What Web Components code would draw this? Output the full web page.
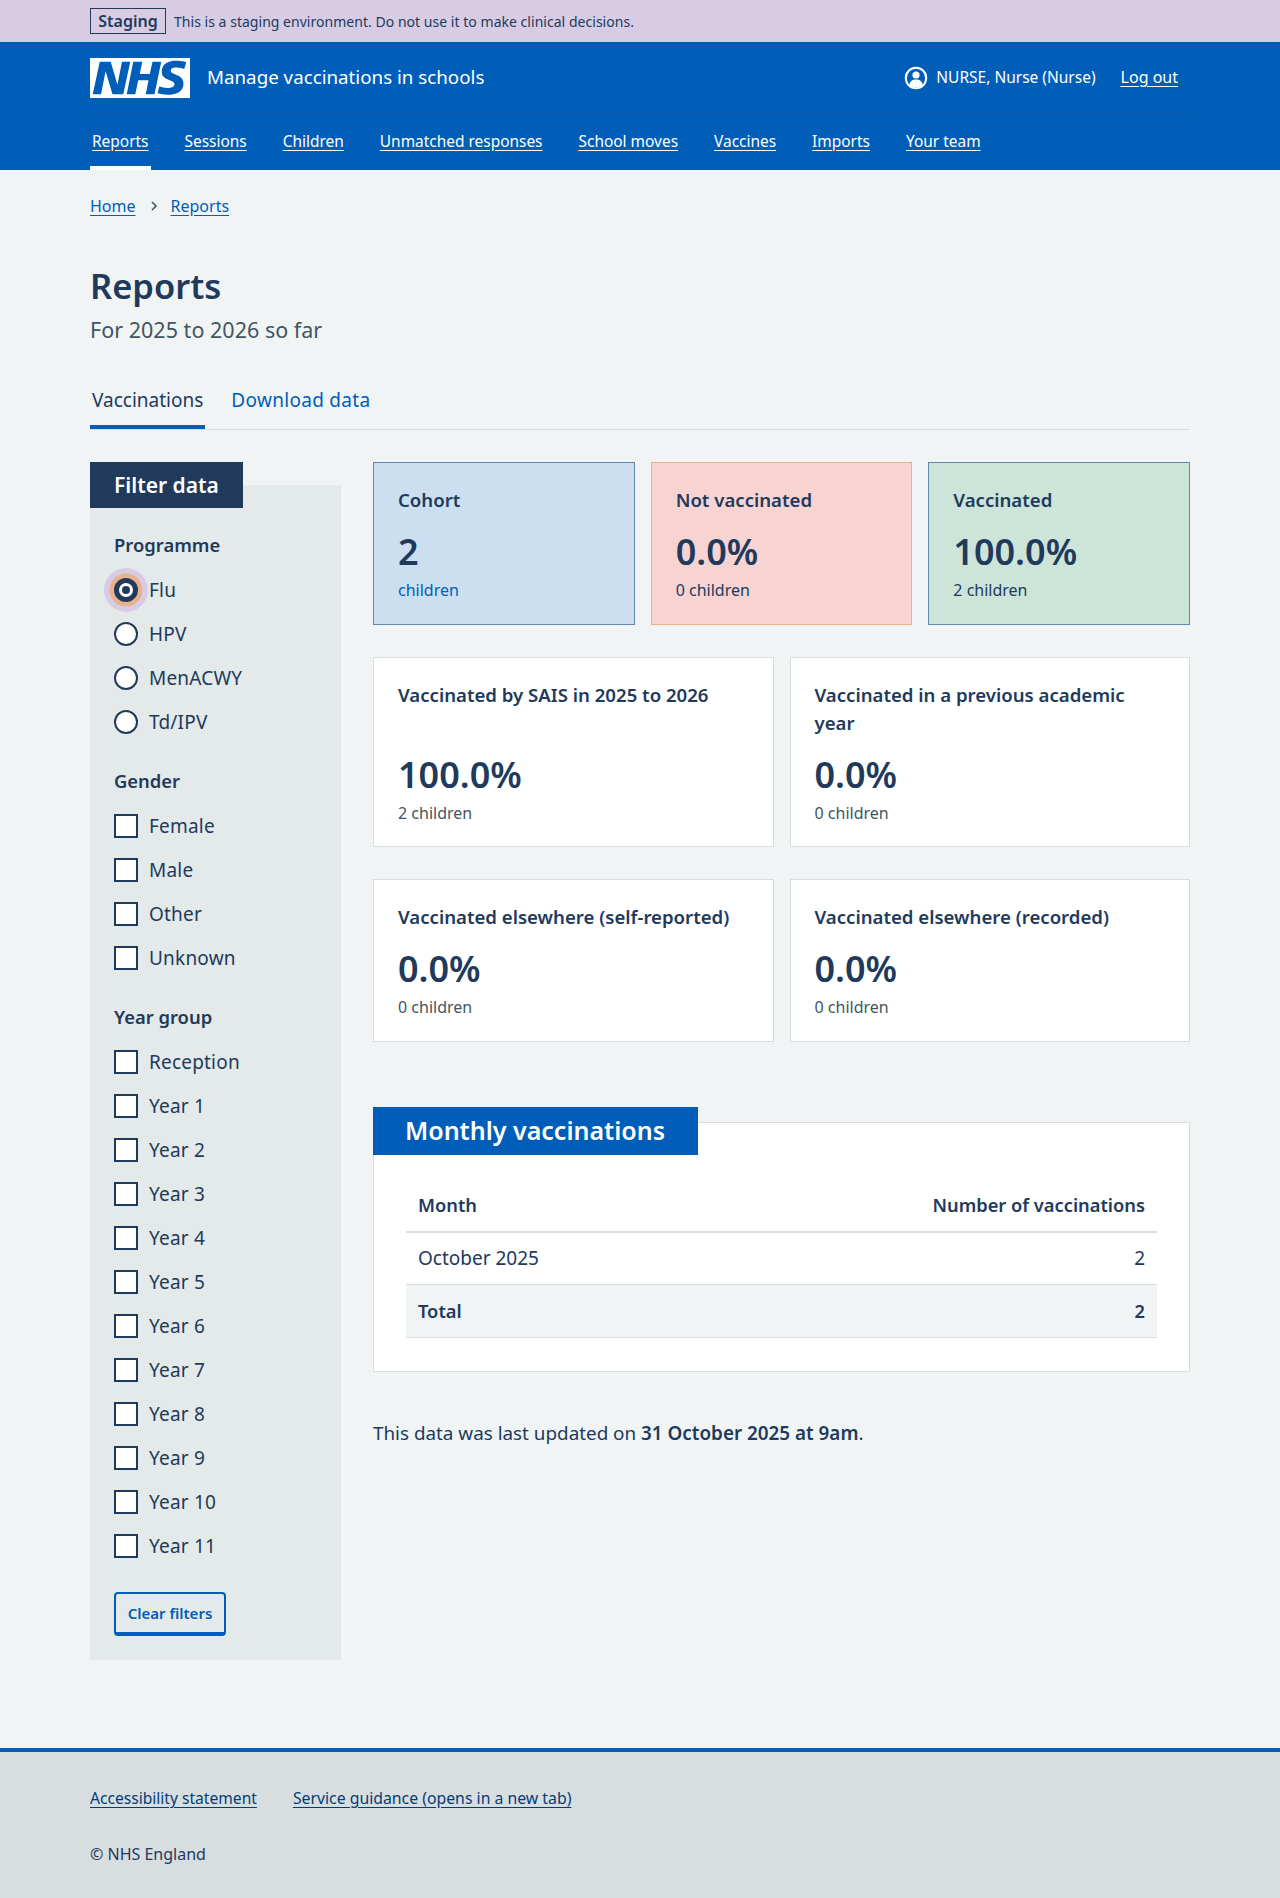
<!DOCTYPE html>
<html lang="en">
<head>
<meta charset="utf-8">
<title>Reports</title>
<style>
  html, body { margin: 0; padding: 0; }
  body {
    background: #f0f4f5;
    color: #213a5c;
    font-family: "Noto Sans", "Open Sans", Arial, sans-serif;
    font-size: 17px;
    line-height: 24px;
  }
</style>
</head>
<body>
<staging-banner>This is a staging environment. Do not use it to make clinical decisions.</staging-banner>
<site-header service="Manage vaccinations in schools" user="NURSE, Nurse (Nurse)"></site-header>
<bread-crumbs></bread-crumbs>
<page-main>
  <page-title slot="title" sub="For 2025 to 2026 so far">Reports</page-title>
  <page-tabs slot="tabs"></page-tabs>
  <filter-panel slot="side">
    <filter-group legend="Programme" type="radio" options="Flu,HPV,MenACWY,Td/IPV" selected="Flu"></filter-group>
    <filter-group legend="Gender" type="checkbox" options="Female,Male,Other,Unknown"></filter-group>
    <filter-group legend="Year group" type="checkbox" options="Reception,Year 1,Year 2,Year 3,Year 4,Year 5,Year 6,Year 7,Year 8,Year 9,Year 10,Year 11"></filter-group>
  </filter-panel>
  <stat-row cols="3">
    <stat-card tone="blue" heading="Cohort" value="2" note="children"></stat-card>
    <stat-card tone="red" heading="Not vaccinated" value="0.0%" note="0 children"></stat-card>
    <stat-card tone="green" heading="Vaccinated" value="100.0%" note="2 children"></stat-card>
  </stat-row>
  <stat-row cols="2">
    <stat-card heading="Vaccinated by SAIS in 2025 to 2026" value="100.0%" note="2 children" tall></stat-card>
    <stat-card heading="Vaccinated in a previous academic&lt;br&gt;year" value="0.0%" note="0 children" tall></stat-card>
  </stat-row>
  <stat-row cols="2">
    <stat-card heading="Vaccinated elsewhere (self-reported)" value="0.0%" note="0 children"></stat-card>
    <stat-card heading="Vaccinated elsewhere (recorded)" value="0.0%" note="0 children"></stat-card>
  </stat-row>
  <monthly-table></monthly-table>
  <updated-note>This data was last updated on <b>31 October 2025 at 9am</b>.</updated-note>
</page-main>
<site-footer></site-footer>

<script>
const define = (name, html) => {
  customElements.define(name, class extends HTMLElement {
    connectedCallback() {
      if (this.shadowRoot) return;
      const root = this.attachShadow({mode: 'open'});
      root.innerHTML = typeof html === 'function' ? html(this) : html;
    }
  });
};

define('staging-banner', `
  <style>
    :host { display: block; background: #d8cce4; height: 42px; }
    .in { width: 1100px; margin: 0 auto; height: 42px; display: flex; align-items: center; gap: 8px; font-size: 14px; }
    .in span { position: relative; top: 1px; letter-spacing: .03px; }
    strong { border: 1px solid #213a5c; height: 26px; width: 76px; box-sizing: border-box; display: flex; align-items: center; justify-content: center; font-size: 16px; font-weight: 600; }
  </style>
  <div class="in"><strong>Staging</strong><span><slot></slot></span></div>`);

const navItems = ['Reports', 'Sessions', 'Children', 'Unmatched responses', 'School moves', 'Vaccines', 'Imports', 'Your team'];

define('site-header', el => `
  <style>
    :host { display: block; background: #005eb8; color: #fff; height: 128px; }
    .top { width: 1100px; margin: 0 auto; height: 71px; border-bottom: 1px solid #0a5aa8; display: flex; align-items: center; }
    .logo { display: block; width: 100px; height: 40px; }
    .service { margin-left: 17px; font-size: 18.75px; margin-top: -2px; }
    .user { margin-left: auto; display: flex; align-items: center; gap: 8px; font-size: 15.5px; }
    .user svg { width: 24px; height: 24px; display: block; }
    .user span { margin-top: -1px; }
    a { color: #fff; text-decoration: underline; text-underline-offset: 3px; }
    .out { margin-left: 25px; margin-right: 12px; margin-top: -1px; font-size: 16px; }
    nav { width: 1100px; margin: 0 auto; height: 56px; display: flex; gap: 32px; font-size: 15.45px; }
    nav a { display: flex; align-items: center; padding: 2px 2px 4px; box-sizing: border-box; height: 56px; }
    nav a.on { border-bottom: 4px solid #fff; padding-bottom: 0; }
  </style>
  <div class="top">
    <svg class="logo" viewBox="0 0 40 16" role="img" aria-label="NHS"><path fill="#fff" d="M0 0h40v16H0z"/><path fill="#005eb8" d="M3.9 1.5h4.4l2.6 9h.1l1.8-9h3.3l-2.8 13H9l-2.7-9h-.1l-1.8 9H1.1M17.3 1.5h3.6l-1 4.9h4L25 1.5h3.5l-2.7 13h-3.5l1.1-5.6h-4.1l-1.2 5.6h-3.4M37.7 4.4c-.7-.3-1.6-.6-2.9-.6-1.4 0-2.5.2-2.5 1.3 0 1.8 5.1 1.2 5.1 5.1 0 3.6-3.3 4.5-6.4 4.5-1.3 0-2.9-.3-4-.7l.8-2.7c.7.4 2.1.7 3.2.7s2.8-.2 2.8-1.5c0-2.1-5.1-1.3-5.1-5 0-3.4 2.9-4.4 5.8-4.4 1.6 0 3.1.2 4 .6"/></svg>
    <span class="service">${el.getAttribute('service')}</span>
    <div class="user">
      <svg viewBox="0 0 24 24" aria-hidden="true"><circle cx="12" cy="12" r="10.2" fill="none" stroke="#fff" stroke-width="2"/><circle cx="12" cy="9" r="3.6" fill="#fff"/><path fill="#fff" d="M5.5 19c0-3.6 2.6-5.6 6.5-5.6s6.5 2 6.5 5.6a10 10 0 0 1-13 0z"/></svg>
      <span>${el.getAttribute('user')}</span>
    </div>
    <a class="out" href="#">Log out</a>
  </div>
  <nav>${navItems.map((n, i) => `<a href="#" class="${i ? '' : 'on'}">${n}</a>`).join('')}</nav>`);

define('bread-crumbs', `
  <style>
    :host { display: block; width: 1100px; margin: 0 auto; padding-top: 24px; height: 48px; font-size: 16px; }
    div { display: flex; align-items: center; gap: 11px; height: 24px; }
    a { color: #005eb8; text-underline-offset: 3px; }
    svg { width: 8px; height: 12px; margin: 0 2px 0 3px; }
  </style>
  <div><a href="#">Home</a><svg viewBox="0 0 8 12" aria-hidden="true"><path d="M2 2l4 4-4 4" fill="none" stroke="#425563" stroke-width="1.6"/></svg><a href="#">Reports</a></div>`);

define('page-main', `
  <style>
    :host { display: block; width: 1100px; margin: 0 auto; height: 1506px; }
    .cols { display: grid; grid-template-columns: 251px 817px; column-gap: 32px; margin-top: 32px; }
    .right { display: flex; flex-direction: column; gap: 32px; }
  </style>
  <slot name="title"></slot>
  <slot name="tabs"></slot>
  <div class="cols">
    <div><slot name="side"></slot></div>
    <div class="right"><slot></slot></div>
  </div>`);

define('page-title', el => `
  <style>
    :host { display: block; padding-top: 22px; }
    h1 { margin: 0; font-size: 34.5px; line-height: 44px; font-weight: 600; }
    p { margin: 6px 0 0; font-size: 21.5px; line-height: 32px; color: #425563; letter-spacing: .02px; }
  </style>
  <h1><slot></slot></h1>
  <p>${el.getAttribute('sub')}</p>`);

define('page-tabs', `
  <style>
    :host { display: block; margin-top: 33px; border-bottom: 1px solid #d8dde0; height: 51px; box-sizing: border-box; font-size: 19px; }
    div { display: flex; gap: 24px; height: 50px; }
    span, a { display: block; padding: 0 2px; line-height: 42px; }
    span { border-bottom: 4px solid #005eb8; height: 46px; }
    a { color: #005eb8; text-decoration: none; letter-spacing: .3px; }
  </style>
  <div><span>Vaccinations</span><a href="#">Download data</a></div>`);

define('filter-panel', `
  <style>
    :host { display: flow-root; background: #e4e9e9; margin-top: 23px; padding: 0 24px; height: 1175px; box-sizing: border-box; }
    h2 { margin: -23px -24px 0; width: 153px; height: 46px; box-sizing: border-box; background: #213a5c; color: #fff; font-size: 21px; line-height: 46px; padding-left: 24px; font-weight: 600; }
    button { display: block; margin-top: 24px; width: 112px; height: 44px; box-sizing: border-box; background: transparent; border: 2px solid #005eb8; border-bottom-width: 4px; border-radius: 4px; color: #005eb8; font: 600 15px/1 "Noto Sans", sans-serif; padding: 0; }
  </style>
  <h2>Filter data</h2>
  <slot></slot>
  <button>Clear filters</button>`);

define('filter-group', el => {
  const type = el.getAttribute('type');
  const selected = el.getAttribute('selected');
  const rows = el.getAttribute('options').split(',').map(o =>
    `<div class="row"><i class="${type} ${o === selected ? 'on' : ''}"></i><span>${o}</span></div>`).join('');
  return `
  <style>
    :host { display: block; padding-top: 24px; font-size: 19px; }
    h3 { margin: -1px 0 9px; font-size: 18.4px; line-height: 28px; font-weight: 600; }
    .row { display: flex; align-items: center; height: 44px; gap: 11px; letter-spacing: .2px; }
    i { display: block; width: 24px; height: 24px; box-sizing: border-box; background: #fff; border: 2px solid #213a5c; flex: none; }
    .radio { border-radius: 50%; }
    .on { border-width: 5px; position: relative; box-shadow: 0 0 0 4.5px #e8b28e, 0 0 0 10px #d8cce4; }
    .on::after { content: ""; position: absolute; inset: 3px; border-radius: 50%; background: #213a5c; }
  </style>
  <h3>${el.getAttribute('legend')}</h3>${rows}`;
});

define('stat-row', el => `
  <style>
    :host { display: grid; grid-template-columns: repeat(${el.getAttribute('cols')}, 1fr); gap: 16px; }
  </style>
  <slot></slot>`);

const tones = {
  blue: ['#cbdff0', '#5f88ac', '#005eb8'],
  red: ['#f7d3d1', '#eeb08a', '#213a5c'],
  green: ['#cde4d8', '#5f88ac', '#213a5c']
};

define('stat-card', el => {
  const tone = tones[el.getAttribute('tone')] || ['#fff', '#d8dde0', '#425563'];
  return `
  <style>
    :host { display: block; box-sizing: border-box; background: ${tone[0]}; border: 1px solid ${tone[1]}; padding: 23px 24px 21.5px; }
    h3 { margin: 0; font-size: 18.6px; line-height: 28px; font-weight: 600; min-height: ${el.hasAttribute('tall') ? 56 : 28}px; }
    .v { font-size: 36px; line-height: 44px; font-weight: 600; margin-top: 16px; }
    .n { font-size: 16px; line-height: 24px; margin-top: 4px; color: ${tone[2]}; }
  </style>
  <h3>${el.getAttribute('heading')}</h3>
  <div class="v">${el.getAttribute('value')}</div>
  <div class="n">${el.getAttribute('note')}</div>`;
});

define('monthly-table', `
  <style>
    :host { display: block; margin-top: 48px; background: #fff; border: 1px solid #d8dde0; position: relative; height: 250px; box-sizing: border-box; padding: 0 32px; }
    h2 { position: absolute; left: -1px; top: -16px; margin: 0; width: 325px; height: 48px; box-sizing: border-box; padding-left: 32px; background: #005eb8; color: #fff; font-size: 25px; line-height: 47px; font-weight: 600; }
    table { border-collapse: collapse; width: 751px; margin-top: 56px; font-size: 19px; }
    th, td { box-sizing: border-box; padding: 0 12px; height: 53px; text-align: left; border-bottom: 1px solid #d8dde0; font-weight: 400; }
    th { font-weight: 600; font-size: 18.3px; }
    thead th { border-bottom-width: 2px; }
    .r { text-align: right; }
    .t td { background: #f0f4f5; font-weight: 600; font-size: 18.3px; }
  </style>
  <h2>Monthly vaccinations</h2>
  <table>
    <thead><tr><th>Month</th><th class="r">Number of vaccinations</th></tr></thead>
    <tbody>
      <tr><td>October 2025</td><td class="r">2</td></tr>
      <tr class="t"><td>Total</td><td class="r">2</td></tr>
    </tbody>
  </table>`);

define('updated-note', `
  <style>
    :host { display: block; margin-top: 15px; font-size: 18.85px; line-height: 28px; }
    ::slotted(b) { font-weight: 600; }
  </style>
  <slot></slot>`);

define('site-footer', `
  <style>
    :host { display: block; background: #d8dde0; border-top: 4px solid #005eb8; height: 150px; font-size: 15.6px; }
    .in { width: 1100px; margin: 0 auto; padding-top: 34px; }
    .links { display: flex; gap: 36px; }
    a { color: #003d78; text-underline-offset: 3px; }
    a + a { font-size: 15.8px; }
    p { margin: 32px 0 0; color: #213a5c; font-size: 16px; }
  </style>
  <div class="in">
    <div class="links"><a href="#">Accessibility statement</a><a href="#">Service guidance (opens in a new tab)</a></div>
    <p>© NHS England</p>
  </div>`);
</script>
</body>
</html>
